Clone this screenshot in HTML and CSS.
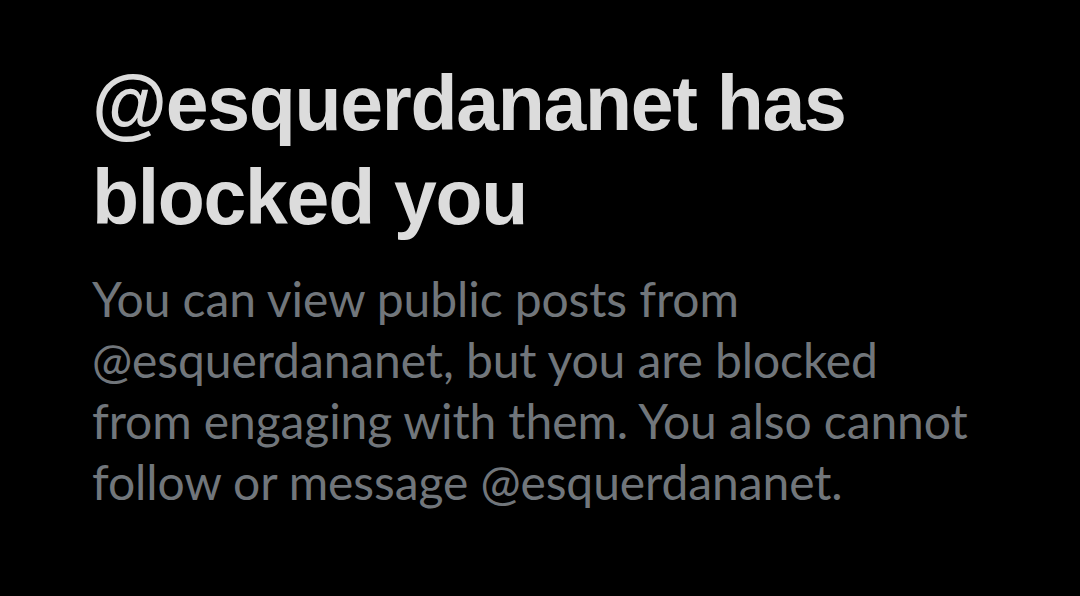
FILE: index.html
```html
<!DOCTYPE html>
<html lang="en">
<head>
	<meta charset="UTF-8">
	<title>Blocked</title>
	<link rel="stylesheet" href="styles.css">
</head>
<body>
	<div class="blocked">
		<h1 class="blocked-title">@esquerdananet has blocked you</h1>
		<p class="blocked-text">You can view public posts from @esquerdananet, but you are blocked from engaging with them. You also cannot follow or message @esquerdananet.</p>
	</div>
</body>
</html>
```
FILE: styles.css
```css
html, body {
	margin: 0;
	height: 100%;
	background-color: black;
}

.blocked {
	padding: 56px 0 0 92px;
	width: 890px;
}

.blocked-title {
	margin: 0;
	font-family: 'Liberation Sans', Arial, sans-serif;
	font-weight: bold;
	font-size: 77px;
	line-height: 94px;
	letter-spacing: -1.3px;
	color: #dcdcdc;
}

.blocked-text {
	margin: 24px 0 0 0;
	font-family: Lato, sans-serif;
	font-size: 48px;
	line-height: 61px;
	letter-spacing: -0.1px;
	color: #71767b;
}
```
